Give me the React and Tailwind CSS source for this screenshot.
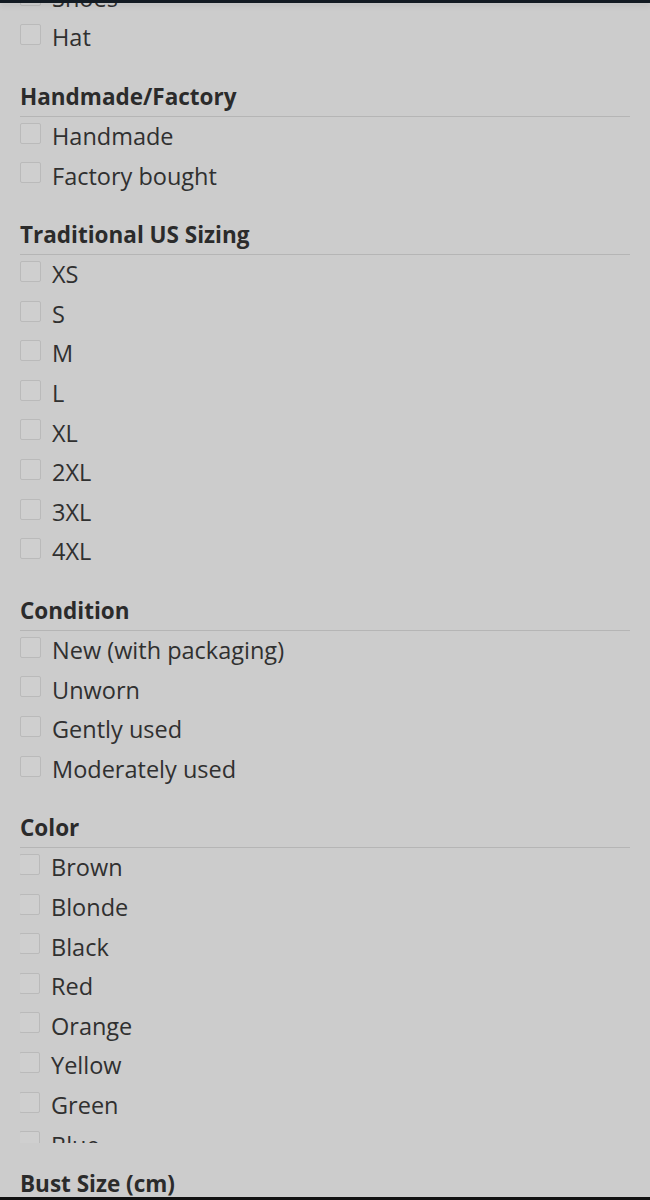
const sections = [
  { title: "Handmade/Factory", items: ["Handmade", "Factory bought"] },
  { title: "Traditional US Sizing", items: ["XS", "S", "M", "L", "XL", "2XL", "3XL", "4XL"] },
  { title: "Condition", items: ["New (with packaging)", "Unworn", "Gently used", "Moderately used"] },
];

const colors = ["Brown", "Blonde", "Black", "Red", "Orange", "Yellow", "Green", "Blue", "Purple", "Pink"];

const Check = ({ label, clipped }) => (
  <label className={`flex h-[39.6px] items-center gap-[11px] ${clipped ? "-ml-[1px]" : ""}`}>
    <span className="mb-[7px] h-[21px] w-[21px] shrink-0 rounded-[2px] border border-[#bababa] bg-[#cfcfcf]" />
    <span className="text-[23.5px] leading-none text-[#303030]">{label}</span>
  </label>
);

const Heading = ({ children, className = "mt-[24px]" }) => (
  <h3 className={`${className} border-b border-[#b5b5b5] pb-[4px] text-[22.5px] font-bold leading-[30px] text-[#2b2b2b]`}>
    {children}
  </h3>
);

const App = () => {
  return (
    <div className="relative h-[1200px] w-[650px] overflow-hidden bg-[#cccccc]" style={{ fontFamily: '"Open Sans", "Noto Sans", sans-serif' }}>
      {/* header bar, mostly scrolled away */}
      <div className="absolute left-0 right-0 top-0 z-10 h-[3px] bg-[#121a22] shadow-[0_2px_6px_rgba(0,0,0,0.12)]" />

      <div className="-mt-[21.2px] px-5">
        <Check label="Shoes" />
        <Check label="Hat" />

        {sections.map((s) => (
          <div key={s.title}>
            <Heading>{s.title}</Heading>
            <div>
              {s.items.map((it) => (
                <Check key={it} label={it} />
              ))}
            </div>
          </div>
        ))}

        <Heading>Color</Heading>
        <div className="h-[295px] overflow-hidden">
          {colors.map((c) => (
            <Check key={c} label={c} clipped />
          ))}
        </div>

        <Heading className="mt-[26px]">Bust Size (cm)</Heading>
      </div>

      <div className="absolute bottom-0 left-0 right-0 z-10 h-[3px] bg-[#111111]" />
    </div>
  );
};

export default App;
